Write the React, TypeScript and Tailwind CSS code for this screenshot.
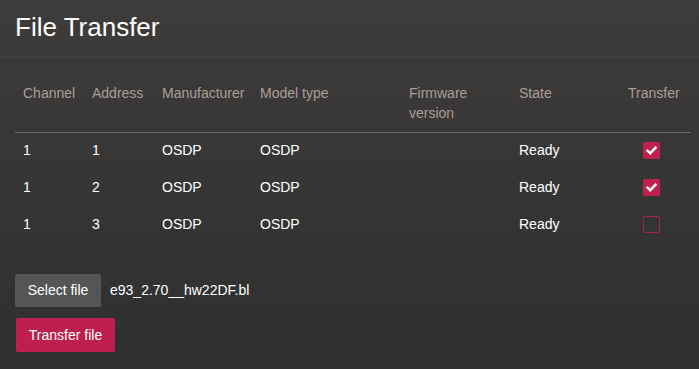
import type { ReactNode } from "react";

type Row = { channel: string; address: string; manufacturer: string; model: string; firmware: string; state: string; checked: boolean };

const ROWS: Row[] = [
  { channel: "1", address: "1", manufacturer: "OSDP", model: "OSDP", firmware: "", state: "Ready", checked: true },
  { channel: "1", address: "2", manufacturer: "OSDP", model: "OSDP", firmware: "", state: "Ready", checked: true },
  { channel: "1", address: "3", manufacturer: "OSDP", model: "OSDP", firmware: "", state: "Ready", checked: false },
];

const COLS = "grid grid-cols-[69px_70px_98px_149px_110px_109px_1fr]";

function Check({ on }: { on: boolean }) {
  if (!on) return <span className="block h-[17px] w-[17px] rounded-[2px] border border-[#a3254d]" />;
  return (
    <span className="flex h-[17px] w-[17px] items-center justify-center rounded-[2px] bg-[#c0204f]">
      <svg width="11" height="9" viewBox="0 0 11 9" fill="none">
        <path d="M1.5 4.6 L4.2 7.2 L9.5 1.8" stroke="white" strokeWidth="2.4" strokeLinecap="square" />
      </svg>
    </span>
  );
}

function Cell({ children }: { children?: ReactNode }) {
  return <div className="px-2">{children}</div>;
}

export default function App() {
  return (
    <div className="h-[369px] w-[699px] overflow-hidden bg-gradient-to-b from-[#3e3c3b] to-[#2f2f2f] font-['Liberation_Sans',Arial,sans-serif] text-white">
      <h1 className="px-[15px] pt-[12px] text-[26px] leading-[30px] text-white">File Transfer</h1>
      <div className="mt-[14px] border-t border-white/[0.04]" />

      <div className="mx-[15px] w-[676px] pt-[26px]">
        <div className={`${COLS} border-b border-[#6a6766] pb-[9px] text-[14px] leading-[20px] text-[#a99f98]`}>
          <Cell>Channel</Cell>
          <Cell>Address</Cell>
          <Cell>Manufacturer</Cell>
          <Cell>Model type</Cell>
          <Cell>Firmware<br />version</Cell>
          <Cell>State</Cell>
          <Cell>Transfer</Cell>
        </div>
        {ROWS.map((r) => (
          <div key={r.address} className={`${COLS} h-[37px] pt-[7px] text-[14px] leading-[20px]`}>
            <Cell>{r.channel}</Cell>
            <Cell>{r.address}</Cell>
            <Cell>{r.manufacturer}</Cell>
            <Cell>{r.model}</Cell>
            <Cell>{r.firmware}</Cell>
            <Cell>{r.state}</Cell>
            <div className="pl-[23px] pt-[2px]">
              <Check on={r.checked} />
            </div>
          </div>
        ))}
      </div>

      <div className="mt-[30px] flex items-center gap-[9px] px-[15px]">
        <button className="h-[33px] w-[86px] rounded-[2px] bg-[#555555] text-[14px] text-white">Select file</button>
        <span className="text-[14px] text-white">e93_2.70__hw22DF.bl</span>
      </div>
      <div className="mt-[11px] px-[16px]">
        <button className="h-[34px] w-[99px] rounded-[2px] bg-[#bf1f4e] text-[14px] text-white">Transfer file</button>
      </div>
    </div>
  );
}
